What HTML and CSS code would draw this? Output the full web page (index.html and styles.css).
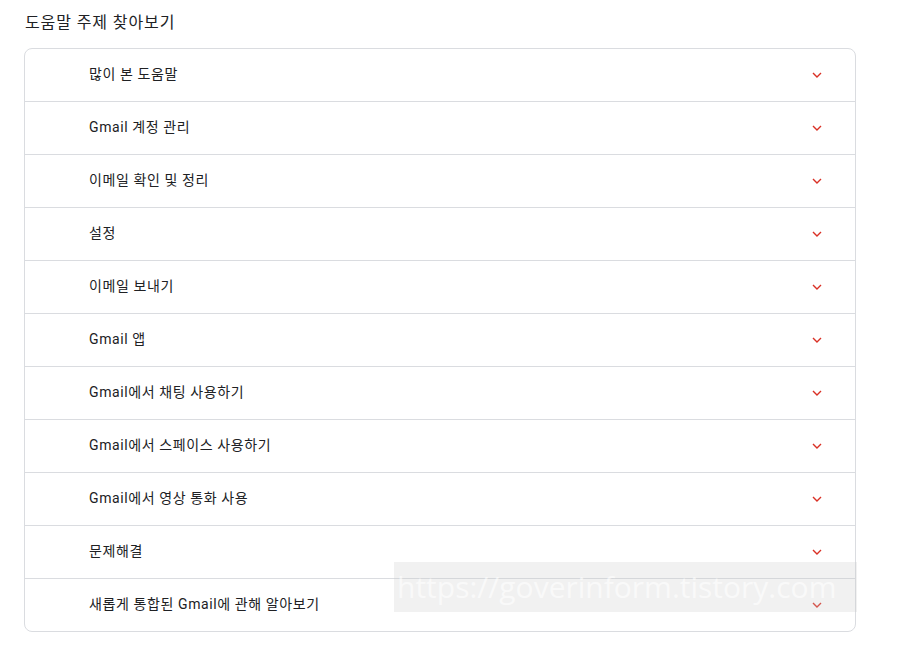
FILE: index.html
```html
<!DOCTYPE html>
<html>
<head>
    <title>도움말 주제 찾아보기</title>
    <meta charset="utf-8">
    <link rel="stylesheet" href="styles.css">
</head>
<body>
    <div class="page">
        <h2 class="title">도움말 주제 찾아보기</h2>
        <div class="topics">
            <div class="topic"><span>많이 본 도움말</span><svg class="chev" viewBox="0 0 10 6"><path d="M1 1l4 4 4-4"/></svg></div>
            <div class="topic"><span>Gmail 계정 관리</span><svg class="chev" viewBox="0 0 10 6"><path d="M1 1l4 4 4-4"/></svg></div>
            <div class="topic"><span>이메일 확인 및 정리</span><svg class="chev" viewBox="0 0 10 6"><path d="M1 1l4 4 4-4"/></svg></div>
            <div class="topic"><span>설정</span><svg class="chev" viewBox="0 0 10 6"><path d="M1 1l4 4 4-4"/></svg></div>
            <div class="topic"><span>이메일 보내기</span><svg class="chev" viewBox="0 0 10 6"><path d="M1 1l4 4 4-4"/></svg></div>
            <div class="topic"><span>Gmail 앱</span><svg class="chev" viewBox="0 0 10 6"><path d="M1 1l4 4 4-4"/></svg></div>
            <div class="topic"><span>Gmail에서 채팅 사용하기</span><svg class="chev" viewBox="0 0 10 6"><path d="M1 1l4 4 4-4"/></svg></div>
            <div class="topic"><span>Gmail에서 스페이스 사용하기</span><svg class="chev" viewBox="0 0 10 6"><path d="M1 1l4 4 4-4"/></svg></div>
            <div class="topic"><span>Gmail에서 영상 통화 사용</span><svg class="chev" viewBox="0 0 10 6"><path d="M1 1l4 4 4-4"/></svg></div>
            <div class="topic"><span>문제해결</span><svg class="chev" viewBox="0 0 10 6"><path d="M1 1l4 4 4-4"/></svg></div>
            <div class="topic"><span>새롭게 통합된 Gmail에 관해 알아보기</span><svg class="chev" viewBox="0 0 10 6"><path d="M1 1l4 4 4-4"/></svg></div>
        </div>
        <div class="watermark">https://goverinform.tistory.com</div>
    </div>
</body>
</html>
```

FILE: styles.css
```css
body{margin:0;background:#fff;color:#202124;font-family:Roboto, "Noto Sans CJK KR", sans-serif;}
.page{position:relative;padding:12px 0 0 24px;width:832px;}
.title{margin:0 0 14px 1px;font-size:16px;font-weight:400;line-height:22px;letter-spacing:0.9px;}
.topics{border:1px solid #dadce0;border-radius:8px;}
.topic{display:flex;align-items:center;justify-content:space-between;height:52px;padding:0 33px 0 64px;font-size:14px;letter-spacing:0.6px;}
.topic span{margin-bottom:4px;}
.topic + .topic{border-top:1px solid #dadce0;}
.chev{width:10px;height:6px;fill:none;stroke:#d93025;stroke-width:1.4;}
.watermark{
    position:absolute;left:394px;top:562px;width:463px;height:50px;
    background:rgba(200,200,200,0.25);color:rgba(255,255,255,0.6);
    font-family:"Open Sans", sans-serif;font-size:30px;line-height:50px;padding-left:3px;box-sizing:border-box;
    white-space:nowrap;overflow:hidden;
}
```
